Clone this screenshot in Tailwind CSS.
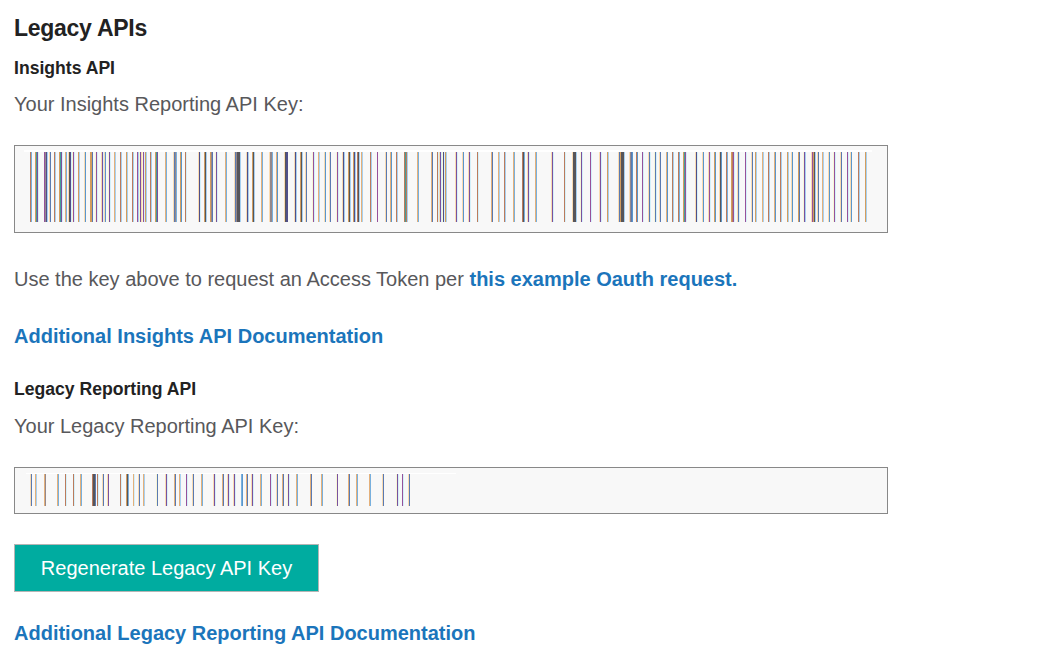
<!DOCTYPE html>
<html lang="en">
<head>
<meta charset="utf-8">
<title>Legacy APIs</title>
<script src="https://cdn.jsdelivr.net/npm/@tailwindcss/browser@4"></script>
</head>
<body class="bg-white font-['Liberation_Sans',Arial,sans-serif] text-[#58585b]">
<main class="flex flex-col items-start pl-3.5 pt-3 text-[20px] leading-8 whitespace-nowrap">
  <h1 class="text-[23px] tracking-[-0.27px] font-bold text-[#222]"><span>Legacy APIs</span></h1>
  <h2 class="mt-2 text-[17.6px] font-bold text-[#222]"><span>Insights API</span></h2>
  <p class="mt-1"><span>Your Insights Reporting API Key:</span></p>
  <div class="mt-[25px] h-[88px] w-[874px] border border-[#888] bg-[#f8f8f8] pl-[9px] pt-1">
    <div class="h-0.5 w-[848px] bg-white"></div>
    <svg id="key-insights" class="block h-[70px] w-[848px]" viewBox="24 0 848 70" shape-rendering="crispEdges"></svg>
  </div>
  <p class="mt-[30px]"><span>Use the key above to request an Access Token per</span> <a class="font-bold text-[#1b75bb]">this example Oauth request.</a></p>
  <p class="mt-[25px]"><a class="font-bold text-[#1b75bb]">Additional Insights API Documentation</a></p>
  <h2 class="mt-[21px] text-[17.6px] font-bold text-[#222]"><span>Legacy Reporting API</span></h2>
  <p class="mt-[5px]"><span>Your Legacy Reporting API Key:</span></p>
  <div class="mt-[25px] h-[47px] w-[874px] border border-[#888] bg-[#f8f8f8] pl-[11px] pt-[5px]">
    <div class="h-px w-[430px] bg-white"></div>
    <svg id="key-legacy" class="block h-8 w-[430px]" viewBox="26 0 430 32" shape-rendering="crispEdges"></svg>
  </div>
  <button class="mt-[30px] flex h-12 w-[305px] items-center justify-center border border-[#b5b5b5] bg-[#00aca0] text-white"><span>Regenerate Legacy API Key</span></button>
  <p class="mt-[25px]"><a class="font-bold text-[#1b75bb]">Additional Legacy Reporting API Documentation</a></p>
</main>
<script>
// Each entry is a left edge followed by one colour letter per pixel column.
const colors = {
  o:'#d39d5e', O:'#e4b07a', p:'#f9dab0', y:'#f8f5d5', r:'#bb7b5c', b:'#78b0de', B:'#5b96cc',
  l:'#a6d0f1', c:'#d3f0fa', v:'#79529f', m:'#96519b', n:'#50508a', d:'#57555a', s:'#5a7ab2',
  t:'#459e98', k:'#94888c'
};
const keys = {
  'key-insights': [70, `30rb 35otvc 44mknl 49ps 54rl 59otvc 65Ob 68pdnc 72ymc 78ol 84pB 90oos 95ymc 101pvc 104pB
    108yvc 114Ol 120rl 126ol 132rl 137mlyvpymcol 150rl 155otv 165Ob 173pskb 180oB 185rc 198pnc 204odl 210oks
    215yvc 225Ob 234pskdddl 246pnl 252odl 261Ob 269pkkb 276OB 284pdnn 294pnl 300odl 305ps 312ymc 318Ol 324pB
    329ps 336ymc 342pnl 348odl 353onl 357rdl 361Ol 370rl 377m 385ps 390OB 396rl 404rtrl 417Ob 431Os
    437rcpvcyncol 455pvc 462pB 468pvc 477rc 491Os 498Ol 504rl 513Ob 522rdb 527pvc 535Ob 551pvc 564rc 572pdddl
    580yvc 590mc 599pvc 607ol 618psodddl 629pksB 636rB 642mc 648psc 654ysc 659ps 666OB 672rl 678rb 683otmc
    695pnc 702pB 708pmc 714oB 719pdB 726rb 731ormc 737psc 745mc 751ps 755ol 762Ol 768rl 774OB 780rl 787ol
    791pB 798os 803yvl 811pmodl 817ps 822Ol 828pB 833ymc 840ps 847mc 850pB 858rl 865ol`],
  'key-legacy': [32, `30ps 35Ol 44Ok 57Ob 65rc 73rc 80Ob 92rdds 97rc 102ps 107pv 120rc 126odb 133Oc 138ps 143Ol
    156ys 165pvc 174Os 179Ol 186mc 192ps 201Ob 213pvc 222Os 227pvc 233pvc 241bB 246Os 251pvc 260Ob 270mc 276ps
    282Os 287yvc 296Ob 310Os 321Ob 336yv 348Os 356Ob 369Ob 382ps 396yvc 402mc 408ps`]
};
for (const [id, [height, data]] of Object.entries(keys)) {
  document.getElementById(id).innerHTML = data.split(/\s+/).map(e => {
    const x = parseInt(e, 10);
    return [...e.replace(/\d+/, '')].map((c, i) =>
      `<rect x="${x + i}" y="0" width="1" height="${height}" fill="${colors[c]}"/>`).join('');
  }).join('');
}
</script>
</body>
</html>
